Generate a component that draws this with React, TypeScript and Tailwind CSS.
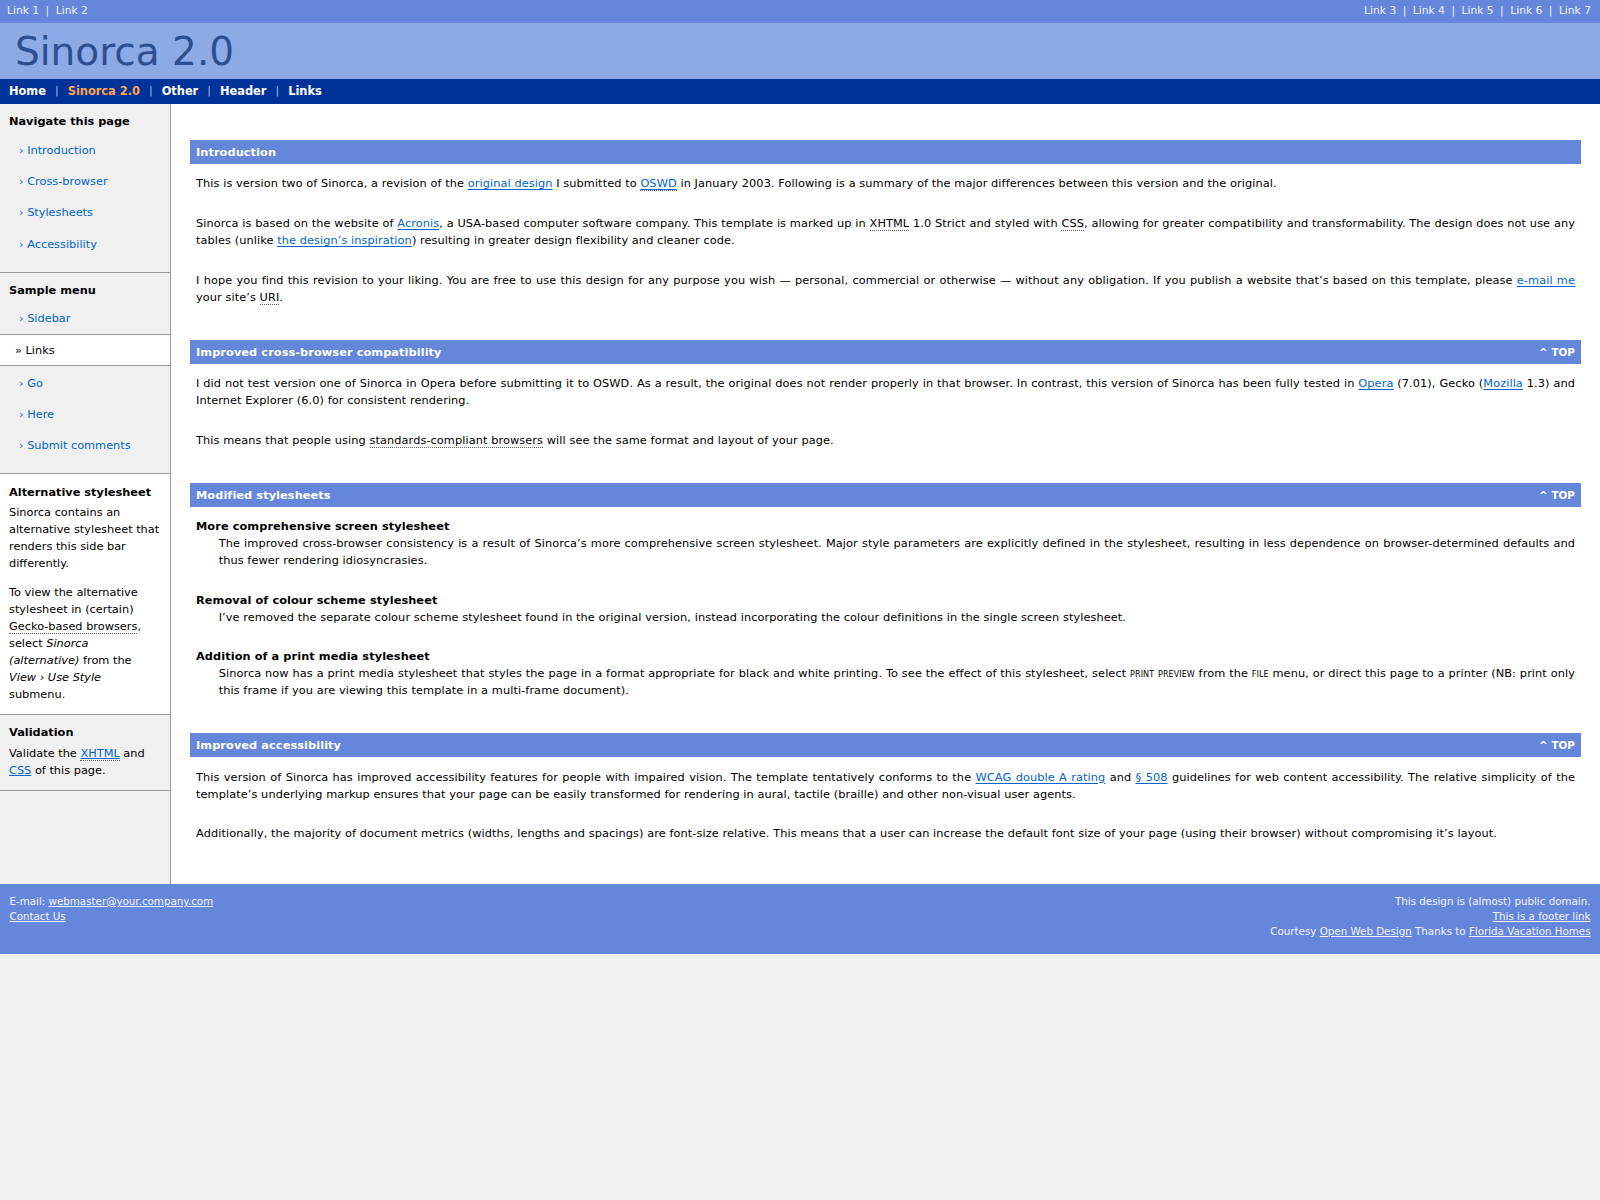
import React from "react";

const topLeft = ["Link 1", "Link 2"];
const topRight = ["Link 3", "Link 4", "Link 5", "Link 6", "Link 7"];
const nav = ["Home", "Sinorca 2.0", "Other", "Header", "Links"];

function Abbr({ children }: { children: React.ReactNode }) {
  return <span className="border-b border-dotted border-[#666]">{children}</span>;
}

function A({ children }: { children: React.ReactNode }) {
  return (
    <a href="#" className="text-[#0066cc] underline underline-offset-[2px]">
      {children}
    </a>
  );
}

function SectionTitle({ title, top }: { title: string; top?: boolean }) {
  return (
    <h1 className="mt-[3em] flex h-[24px] items-center justify-between bg-[#6587db] pl-[1ex] pr-[1ex] pt-[1px] font-bold text-white">
      <span>{title}</span>
      {top && <a href="#" className="text-[91%] font-bold text-white">^ TOP</a>}
    </h1>
  );
}

function P({ children }: { children: React.ReactNode }) {
  return <p className="mx-[1ex] mb-[2em] mt-[1em] text-justify">{children}</p>;
}

function SideLink({ label }: { label: string }) {
  return (
    <li className="py-[0.6px]">
      <a href="#" className="block py-[8.5px] pl-[19px] pr-[6px] leading-[13px] text-[#0066cc]">
        › {label}
      </a>
    </li>
  );
}

function TopLinks({ items }: { items: string[] }) {
  return (
    <div className="flex items-center">
      {items.map((l, i) => (
        <span key={l} className="flex items-center">
          {i > 0 && <span className="px-[6.5px]">|</span>}
          <a href="#">{l}</a>
        </span>
      ))}
    </div>
  );
}

export default function App() {
  return (
    <div className="min-h-screen bg-[#f0f0f0] font-['DejaVu_Sans',sans-serif] text-[11.33px] text-black">
      {/* super header */}
      <div className="flex h-[23px] items-center justify-between bg-[#6587db] pl-[7px] pr-[9px] text-[10.7px] text-[#eef1fb]">
        <TopLinks items={topLeft} />
        <TopLinks items={topRight} />
      </div>

      {/* mid header */}
      <div className="flex h-[56px] items-center bg-[#8caae6] pl-[15px]">
        <h1 className="text-[39px] font-normal leading-none text-[#2c4f91]">Sinorca 2.0</h1>
      </div>

      {/* sub header */}
      <div className="flex h-[25px] items-center bg-[#003399] pl-[9px] text-[11.4px] font-bold">
        {nav.map((n, i) => (
          <span key={n} className="flex items-center">
            {i > 0 && <span className="px-[9px] text-[11px] font-normal text-[#a9bbe8]">|</span>}
            <a href="#" className={n === "Sinorca 2.0" ? "text-[#ffa64d]" : "text-white"}>
              {n}
            </a>
          </span>
        ))}
      </div>

      <div className="flex bg-white">
        {/* side bar */}
        <div className="w-[171px] shrink-0 border-r border-[#999] bg-[#f0f0f0]">
          <div className="border-b border-[#999]">
            <p className="ml-[9px] mb-[0.5em] pt-[1em] font-bold leading-[13px]">Navigate this page</p>
            <ul className="pb-[12px] pt-[1px]">
              {["Introduction", "Cross-browser", "Stylesheets", "Accessibility"].map((l) => (
                <SideLink key={l} label={l} />
              ))}
            </ul>
          </div>
          <div className="border-b border-[#999]">
            <p className="ml-[9px] mb-[0.5em] pt-[1em] font-bold leading-[13px]">Sample menu</p>
            <ul className="pb-[12px]">
              <SideLink label="Sidebar" />
              <li className="border-y border-[#999] bg-white py-[8px] pl-[15px] leading-[14px]">» Links</li>
              <li className="pt-[2px]" />
              <SideLink label="Go" />
              <SideLink label="Here" />
              <SideLink label="Submit comments" />
            </ul>
          </div>
          <div className="border-b border-[#999] bg-white">
            <p className="ml-[9px] mb-[0.5em] pt-[1em] font-bold leading-[13px]">Alternative stylesheet</p>
            <p className="mb-[1em] whitespace-nowrap pl-[9px] leading-[17px]">
              Sinorca contains an<br />
              alternative stylesheet that<br />
              renders this side bar<br />
              differently.
            </p>
            <p className="mb-[1em] whitespace-nowrap pl-[9px] leading-[17px]">
              To view the alternative<br />
              stylesheet in (certain)<br />
              <Abbr>Gecko-based browsers</Abbr>,<br />
              select <em>Sinorca</em><br />
              <em>(alternative)</em> from the<br />
              <em>View › Use Style</em><br />
              submenu.
            </p>
          </div>
          <div className="border-b border-[#999]">
            <p className="ml-[9px] mb-[0.5em] pt-[1em] font-bold leading-[13px]">Validation</p>
            <p className="mb-[1em] whitespace-nowrap pl-[9px] leading-[17px]">
              Validate the <a href="#" className="text-[#0066cc] underline"><Abbr>XHTML</Abbr></a> and<br />
              <a href="#" className="text-[#0066cc] underline">CSS</a> of this page.
            </p>
          </div>
        </div>

        {/* main copy */}
        <div className="min-w-0 flex-1 bg-white px-[19px] pb-[19px] pt-[2px] leading-[17px] tracking-[0.08px]">
          <SectionTitle title="Introduction" />
          <P>
            This is version two of Sinorca, a revision of the <A>original design</A> I submitted to{" "}
            <A>
              <Abbr>OSWD</Abbr>
            </A>{" "}
            in January 2003. Following is a summary of the major differences between this version and the original.
          </P>
          <P>
            Sinorca is based on the website of <A>Acronis</A>, a USA-based computer software company. This template is
            marked up in <Abbr>XHTML</Abbr> 1.0 Strict and styled with <Abbr>CSS</Abbr>, allowing for greater
            compatibility and transformability. The design does not use any tables (unlike{" "}
            <A>the design’s inspiration</A>) resulting in greater design flexibility and cleaner code.
          </P>
          <P>
            I hope you find this revision to your liking. You are free to use this design for any purpose you wish —
            personal, commercial or otherwise — without any obligation. If you publish a website that’s based on this
            template, please <A>e-mail me</A> your site’s <Abbr>URI</Abbr>.
          </P>

          <SectionTitle title="Improved cross-browser compatibility" top />
          <P>
            I did not test version one of Sinorca in Opera before submitting it to OSWD. As a result, the original does
            not render properly in that browser. In contrast, this version of Sinorca has been fully tested in{" "}
            <A>Opera</A> (7.01), Gecko (<A>Mozilla</A> 1.3) and Internet Explorer (6.0) for consistent rendering.
          </P>
          <P>
            This means that people using <Abbr>standards-compliant browsers</Abbr> will see the same format and layout
            of your page.
          </P>

          <SectionTitle title="Modified stylesheets" top />
          <dl className="mx-[1ex] mb-[2em] mt-[1em] text-justify">
            <dt className="font-bold">More comprehensive screen stylesheet</dt>
            <dd className="mb-[2em] ml-[2em]">
              The improved cross-browser consistency is a result of Sinorca’s more comprehensive screen stylesheet.
              Major style parameters are explicitly defined in the stylesheet, resulting in less dependence on
              browser-determined defaults and thus fewer rendering idiosyncrasies.
            </dd>
            <dt className="font-bold">Removal of colour scheme stylesheet</dt>
            <dd className="mb-[2em] ml-[2em]">
              I’ve removed the separate colour scheme stylesheet found in the original version, instead incorporating
              the colour definitions in the single screen stylesheet.
            </dd>
            <dt className="font-bold">Addition of a print media stylesheet</dt>
            <dd className="mb-[2em] ml-[2em]">
              Sinorca now has a print media stylesheet that styles the page in a format appropriate for black and white
              printing. To see the effect of this stylesheet, select{" "}
              <span className="[font-variant:small-caps]">print preview</span> from the{" "}
              <span className="[font-variant:small-caps]">file</span> menu, or direct this page to a printer (NB: print
              only this frame if you are viewing this template in a multi-frame document).
            </dd>
          </dl>

          <SectionTitle title="Improved accessibility" top />
          <P>
            This version of Sinorca has improved accessibility features for people with impaired vision. The template
            tentatively conforms to the <A>WCAG double A rating</A> and <A>§ 508</A> guidelines for web content
            accessibility. The relative simplicity of the template’s underlying markup ensures that your page can be
            easily transformed for rendering in aural, tactile (braille) and other non-visual user agents.
          </P>
          <P>
            Additionally, the majority of document metrics (widths, lengths and spacings) are font-size relative. This
            means that a user can increase the default font size of your page (using their browser) without
            compromising it’s layout.
          </P>
        </div>
      </div>

      {/* footer */}
      <div className="flex h-[70px] justify-between bg-[#6587db] px-[9.5px] pt-[10px] text-[10.3px] leading-[15px] text-[#f2f4fd]">
        <div>
          <div>
            E-mail: <a href="#" className="underline">webmaster@your.company.com</a>
          </div>
          <div>
            <a href="#" className="underline">Contact Us</a>
          </div>
        </div>
        <div className="text-right">
          <div>This design is (almost) public domain.</div>
          <div>
            <a href="#" className="underline">This is a footer link</a>
          </div>
          <div>
            Courtesy <a href="#" className="underline">Open Web Design</a> Thanks to{" "}
            <a href="#" className="underline">Florida Vacation Homes</a>
          </div>
        </div>
      </div>
    </div>
  );
}
